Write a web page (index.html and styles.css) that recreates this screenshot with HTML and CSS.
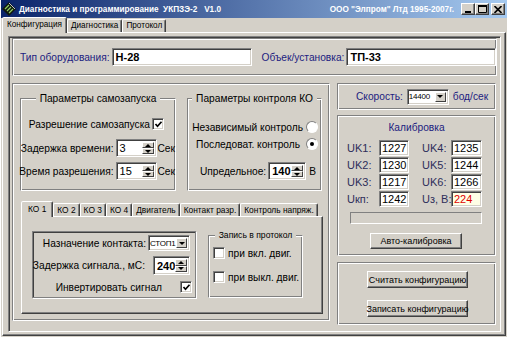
FILE: index.html
```html
<!DOCTYPE html>
<html lang="ru">
<head>
  <meta charset="UTF-8">
  <title>Диагностика и программирование УКПЗЭ-2</title>
  <link rel="stylesheet" href="styles.css">
</head>
<body>
  <div id="window">
    <div id="titleBar">
      <svg class="app-icon" width="14" height="14" viewBox="0 0 14 14">
        <path d="M7 0 L14 7 L7 14 L0 7 Z" fill="#101810"/>
        <path d="M3 7 L7 3 M5 9 L9 5 M7 11 L11 7" stroke="#8fd060" stroke-width="1.2"/>
        <path d="M7 1 L13 7" stroke="#c8c8c8" stroke-width="1"/>
      </svg>
      <span class="title">Диагностика и программирование&nbsp; УКПЗЭ-2 &nbsp; V1.0</span>
      <span class="copyright">ООО "Элпром" Лтд 1995-2007г.</span>
      <div class="caption-buttons">
        <span class="caption-button">
          <svg width="8" height="7" viewBox="0 0 8 7"><rect x="1" y="5" width="6" height="2" fill="#000"/></svg>
        </span>
        <span class="caption-button">
          <svg width="9" height="8" viewBox="0 0 9 8"><path d="M0.5 1.5 H8.5 V7.5 H0.5 Z" fill="none" stroke="#000"/><rect x="0" y="0" width="9" height="2" fill="#000"/></svg>
        </span>
        <span class="caption-button close">
          <svg width="8" height="7" viewBox="0 0 8 7"><path d="M0.5 0 L7.5 7 M7.5 0 L0.5 7" stroke="#000" stroke-width="1.6"/></svg>
        </span>
      </div>
    </div>

    <div class="tab-strip">
      <span class="tab active">Конфигурация</span>
      <span class="tab">Диагностика</span>
      <span class="tab">Протокол</span>
    </div>

    <div class="tab-page">
      <div class="frame">
        <div class="panel" id="equipPanel">
          <span class="label blue">Тип оборудования:</span>
          <span class="edit bold" id="equipType">Н-28</span>
          <span class="label blue obj-label">Объек/установка:</span>
          <span class="edit bold" id="objName">ТП-33</span>
        </div>

        <div class="main-row">
          <div class="panel" id="paramsPanel">
            <div class="group-row">
              <div class="group" id="autostartGroup">
                <span class="group-caption">Параметры самозапуска</span>
                <div class="row" id="allowRow">
                  <span class="label">Разрешение самозапуска</span>
                  <span class="check checked"><svg width="9" height="9" viewBox="0 0 9 9"><path d="M1.5 4 L3.5 6.3 L7.5 1.8" fill="none" stroke="#000" stroke-width="1.7"/></svg></span>
                </div>
                <div class="row" id="delayRow">
                  <span class="label">Задержка времени:</span>
                  <span class="spin w41"><span class="spin-text">3</span><span class="spin-btns"><span class="spin-up"></span><span class="spin-down"></span></span></span>
                  <span class="label unit">Сек</span>
                </div>
                <div class="row" id="permitRow">
                  <span class="label">Время разрешения:</span>
                  <span class="spin w41"><span class="spin-text">15</span><span class="spin-btns"><span class="spin-up"></span><span class="spin-down"></span></span></span>
                  <span class="label unit">Сек</span>
                </div>
              </div>

              <div class="group" id="controlGroup">
                <span class="group-caption">Параметры контроля КО</span>
                <div class="row" id="indepRow">
                  <span class="label">Независимый контроль</span>
                  <span class="radio"></span>
                </div>
                <div class="row" id="seqRow">
                  <span class="label">Последоват. контроль</span>
                  <span class="radio selected"></span>
                </div>
                <div class="row" id="limitRow">
                  <span class="label">Uпредельное:</span>
                  <span class="spin w38"><span class="spin-text bold">140</span><span class="spin-btns"><span class="spin-up"></span><span class="spin-down"></span></span></span>
                  <span class="label unit">В</span>
                </div>
              </div>
            </div>

            <div class="tab-strip ko-tabs">
              <span class="tab active">КО 1</span>
              <span class="tab">КО 2</span>
              <span class="tab">КО 3</span>
              <span class="tab">КО 4</span>
              <span class="tab">Двигатель</span>
              <span class="tab">Контакт разр.</span>
              <span class="tab">Контроль напряж.</span>
            </div>
            <div class="ko-page">
              <div class="inset-panel">
                <div class="row" id="assignRow">
                  <span class="label">Назначение контакта:</span>
                  <span class="combo w42"><span class="combo-text">СТОП1</span><span class="combo-btn"></span></span>
                </div>
                <div class="row" id="signalRow">
                  <span class="label">Задержка сигнала., мС:</span>
                  <span class="spin w37 tall"><span class="spin-text bold">240</span><span class="spin-btns"><span class="spin-up"></span><span class="spin-down"></span></span></span>
                </div>
                <div class="row" id="invertRow">
                  <span class="label">Инвертировать сигнал</span>
                  <span class="check checked"><svg width="9" height="9" viewBox="0 0 9 9"><path d="M1.5 4 L3.5 6.3 L7.5 1.8" fill="none" stroke="#000" stroke-width="1.7"/></svg></span>
                </div>
              </div>
              <div class="group" id="logGroup">
                <span class="group-caption small">Запись в протокол</span>
                <div class="row" id="logOnRow">
                  <span class="check"></span>
                  <span class="label">при вкл. двиг.</span>
                </div>
                <div class="row" id="logOffRow">
                  <span class="check"></span>
                  <span class="label">при выкл. двиг.</span>
                </div>
              </div>
            </div>
          </div>

          <div class="side">
            <div class="panel" id="speedPanel">
              <span class="label blue">Скорость:</span>
              <span class="combo w42"><span class="combo-text">14400</span><span class="combo-btn"></span></span>
              <span class="label blue">бод/сек</span>
            </div>

            <div class="panel" id="calibPanel">
              <span class="label blue calib-title">Калибровка</span>
              <div class="calib-grid">
                <span class="label grey">UK1:</span><span class="edit num">1227</span>
                <span class="label grey">UK4:</span><span class="edit num">1235</span>
                <span class="label grey">UK2:</span><span class="edit num">1230</span>
                <span class="label grey">UK5:</span><span class="edit num">1244</span>
                <span class="label grey">UK3:</span><span class="edit num">1217</span>
                <span class="label grey">UK6:</span><span class="edit num">1266</span>
                <span class="label grey">Uкп:</span><span class="edit num">1242</span>
                <span class="label grey">Uз, В:</span><span class="edit num alarm">224</span>
              </div>
              <div class="progress"></div>
              <span class="button" id="autoCalib">Авто-калибровка</span>
            </div>

            <div class="panel" id="configPanel">
              <span class="button config-button">Считать конфигурацию</span>
              <span class="button config-button">Записать конфигурацию</span>
            </div>
          </div>
        </div>
      </div>
    </div>
  </div>
</body>
</html>
```

FILE: styles.css
```css
* {
  box-sizing: border-box;
}
body {
  margin: 0;
  width: 507px;
  height: 337px;
  overflow: hidden;
  background-color: #D4D0C8;
  font-family: "Liberation Sans", Arial, sans-serif;
  font-size: 10.2px;
  color: #000;
}
#window {
  height: 337px;
  display: flex;
  flex-direction: column;
  border-left: 1px solid #fff;
}

/* Title bar */
#titleBar {
  height: 18px;
  display: flex;
  align-items: center;
  background: linear-gradient(to right, #0A246A, #A6CAF0);
  color: white;
  font-weight: bold;
  font-size: 8.2px;
  padding: 0 2px 0 0;
}
.app-icon {
  margin: 0 3px 0 1px;
}
.title {
  flex: 1;
  white-space: pre;
}
.copyright {
  margin-right: 7px;
}
.caption-buttons {
  display: flex;
}
.caption-button {
  width: 14px;
  height: 12px;
  display: flex;
  align-items: center;
  justify-content: center;
  background: #D4D0C8;
  border: 1px solid;
  border-color: #fff #404040 #404040 #fff;
  box-shadow: inset -1px -1px #808080;
}
.caption-button.close {
  margin-left: 2px;
}

/* Tabs */
.tab-strip {
  height: 14px;
  display: flex;
  align-items: flex-end;
  padding-left: 1px;
  font-size: 8.2px;
}
.tab {
  height: 13px;
  padding: 0 3px;
  border: 1px solid;
  border-bottom: none;
  border-color: #fff #404040 transparent #fff;
  border-radius: 2px 2px 0 0;
  box-shadow: inset -1px 0 #808080;
  line-height: 12px;
  white-space: nowrap;
}
.tab.active {
  height: 16px;
  margin-bottom: -1px;
  padding: 0 4px;
  position: relative;
  background: #D4D0C8;
  line-height: 14px;
}
.tab-page {
  flex: 1;
  margin: 0 1px 1px 1px;
  border: 1px solid;
  border-color: #fff #404040 #404040 #fff;
  box-shadow: inset -1px -1px #808080;
  padding: 3px 4px 3px 5px;
}
.frame {
  height: 100%;
  border: 1px solid;
  border-color: #808080 #fff #fff #808080;
  box-shadow: inset 1px 1px #404040;
  padding: 1px 3px 0 3px;
  display: flex;
  flex-direction: column;
  gap: 7px;
}

/* Panels and groups */
.panel, .group {
  border: 1px solid;
  border-color: #808080 #fff #fff #808080;
  box-shadow: inset 1px 1px #fff, inset -1px -1px #808080;
}
.group {
  display: flex;
  flex-direction: column;
}
.group-caption {
  align-self: center;
  margin-top: -7px;
  padding: 0 4px;
  background: #D4D0C8;
  line-height: 13px;
  white-space: nowrap;
}
.group-caption.small {
  font-size: 8.6px;
}
.row {
  display: flex;
  align-items: center;
  justify-content: flex-end;
}
.label {
  white-space: nowrap;
}
.blue {
  color: #1C1C80;
}
.grey {
  color: #2E2E5A;
}
.bold {
  font-weight: bold;
}
.unit {
  margin-left: -1px;
}

/* Controls */
.edit, .spin, .combo, .progress {
  flex-shrink: 0;
  background: #fff;
  border: 1px solid;
  border-color: #808080 #fff #fff #808080;
  box-shadow: inset 1px 1px #404040, inset -1px -1px #D4D0C8;
}
.edit {
  height: 18px;
  display: flex;
  align-items: center;
  padding: 0 3px;
  font-size: 11px;
}
.spin, .combo {
  height: 18px;
  display: flex;
  align-items: center;
  padding: 2px;
  font-size: 11px;
}
.spin-text, .combo-text {
  flex: 1;
  padding-left: 1px;
  white-space: nowrap;
}
.spin-btns {
  width: 12px;
  height: 100%;
  display: flex;
  flex-direction: column;
}
.spin-up, .spin-down, .combo-btn {
  flex: 1;
  display: flex;
  align-items: center;
  justify-content: center;
  background: #D4D0C8;
  border: 1px solid;
  border-color: #fff #404040 #404040 #fff;
}
.spin-up::after {
  content: "";
  border: 3px solid transparent;
  border-bottom: 3px solid #000;
  border-top: none;
}
.spin-down::after, .combo-btn::after {
  content: "";
  border: 3px solid transparent;
  border-top: 3px solid #000;
  border-bottom: none;
}
.combo {
  height: 16px;
  padding: 2px 2px 2px 1px;
  font-size: 8px;
  letter-spacing: -0.2px;
}
.combo-text {
  padding-left: 0;
}
.combo-btn {
  flex: 0 0 11px;
  height: 100%;
}
.w41 { width: 41px; }
.w38 { width: 38px; }
.w37 { width: 37px; }
.w42 { width: 42px; }
.spin.tall {
  height: 19px;
}
.check {
  flex-shrink: 0;
  width: 12px;
  height: 12px;
  display: flex;
  align-items: center;
  justify-content: center;
  background: #fff;
  border: 1px solid;
  border-color: #808080 #fff #fff #808080;
  box-shadow: inset 1px 1px #404040, inset -1px -1px #D4D0C8;
}
.radio {
  flex-shrink: 0;
  width: 12px;
  height: 12px;
  border-radius: 50%;
  background: #fff;
  border: 1px solid;
  border-color: #808080 #fff #fff #808080;
  display: flex;
  align-items: center;
  justify-content: center;
}
.radio.selected::after {
  content: "";
  width: 4px;
  height: 4px;
  border-radius: 50%;
  background: #000;
}
.button {
  display: flex;
  align-items: center;
  justify-content: center;
  background: #D4D0C8;
  border: 1px solid;
  border-color: #fff #404040 #404040 #fff;
  box-shadow: inset -1px -1px #808080;
  font-size: 9px;
  white-space: nowrap;
}

/* Equipment panel */
#equipPanel {
  height: 38px;
  display: flex;
  align-items: center;
  padding-left: 7px;
}
#equipType {
  width: 140px;
  margin-left: 2px;
}
.obj-label {
  margin-left: 10px;
}
#objName {
  width: 150px;
  margin-left: 2px;
}

.main-row {
  display: flex;
  align-items: flex-start;
  gap: 7px;
}

/* Left parameters panel */
#paramsPanel {
  width: 318px;
  height: 238px;
  padding: 14px 0 0 7px;
  display: flex;
  flex-direction: column;
}
.group-row {
  display: flex;
  gap: 11px;
}
#autostartGroup {
  width: 156px;
  height: 93px;
}
#allowRow {
  margin-top: 13px;
  padding-right: 11px;
  gap: 2px;
}
#delayRow {
  margin-top: 9px;
  padding-right: 0;
  gap: 2px;
}
#permitRow {
  margin-top: 5px;
  padding-right: 0;
  gap: 2px;
}
#controlGroup {
  width: 135px;
  height: 93px;
}
#indepRow {
  margin-top: 16px;
  padding-right: 3px;
  gap: 3px;
}
#seqRow {
  margin-top: 5px;
  padding-right: 3px;
  gap: 6px;
}
#limitRow {
  margin-top: 12px;
  padding-right: 5px;
  gap: 2px;
}
#limitRow .unit {
  margin-left: 1px;
}

.ko-tabs {
  margin-top: 9px;
  height: 16px;
  padding-left: 1px;
  font-size: 8.4px;
}
.ko-tabs .tab {
  padding: 0 3px;
}
.ko-tabs .tab.active {
  padding: 0 6px;
}
.ko-page {
  width: 302px;
  height: 98px;
  margin-left: 1px;
  border: 1px solid;
  border-color: #fff #404040 #404040 #fff;
  box-shadow: inset -1px -1px #808080;
  padding: 14px 0 0 10px;
  display: flex;
  align-items: flex-start;
  gap: 12px;
}
.inset-panel {
  width: 164px;
  height: 67px;
  border: 1px solid #808080;
  box-shadow: inset 1px 1px #404040, 1px 1px #fff;
  display: flex;
  flex-direction: column;
  padding-top: 3px;
}
#assignRow {
  padding-right: 5px;
  gap: 2px;
}
#signalRow {
  margin-top: 5px;
  padding-right: 5px;
  gap: 8px;
}
#invertRow {
  margin-top: 6px;
  padding-right: 3px;
  gap: 18px;
}
#logGroup {
  width: 95px;
  height: 63px;
  margin-top: 4px;
}
#logGroup .row {
  justify-content: flex-start;
  padding-left: 4px;
  gap: 3px;
}
#logOnRow {
  margin-top: 5px;
}
#logOffRow {
  margin-top: 12px;
}

/* Right column */
.side {
  width: 159px;
  display: flex;
  flex-direction: column;
}
#speedPanel {
  height: 27px;
  display: flex;
  align-items: center;
  padding-left: 18px;
  gap: 4px;
}
#calibPanel {
  height: 141px;
  margin-top: 5px;
  display: flex;
  flex-direction: column;
  padding-top: 5px;
}
.calib-title {
  align-self: center;
  line-height: 13px;
}
.calib-grid {
  margin: 6px 0 0 9px;
  display: grid;
  grid-template-columns: 32px 30px 42px 31px;
  row-gap: 1px;
  align-items: center;
}
.calib-grid .label {
  font-size: 11px;
}
.calib-grid .label:nth-child(4n+3) {
  margin-left: 13px;
}
.edit.num {
  height: 16px;
  padding: 0 2px;
}
.edit.alarm {
  color: #E00000;
  background: #FFFFE6;
}
.progress {
  width: 132px;
  height: 12px;
  margin: 5px 0 0 12px;
  background: #D4D0C8;
  box-shadow: none;
}
#autoCalib {
  width: 92px;
  height: 16px;
  margin: 9px 0 0 32px;
}
#configPanel {
  height: 63px;
  margin-top: 6px;
  display: flex;
  flex-direction: column;
  align-items: flex-end;
  padding: 8px 27px 0 0;
  gap: 12px;
}
.config-button {
  width: 101px;
  height: 17px;
}
```
